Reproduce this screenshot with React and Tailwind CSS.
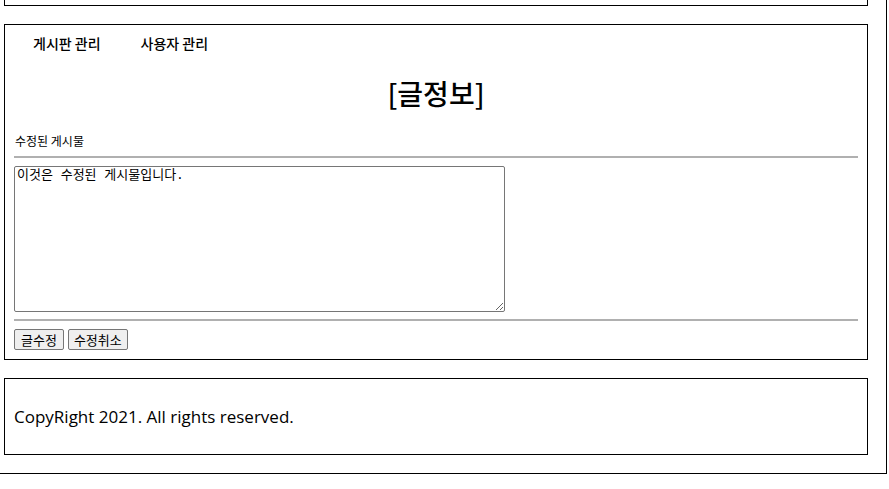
import React from 'react'

const kr = { fontFamily: '"Noto Sans CJK KR", "Noto Sans", sans-serif' };

function Nav() {
  return (
    <div className="flex gap-[40px] pl-[19px] pt-[8px] text-[14px] font-medium text-black leading-[20px]">
      <span>게시판 관리</span>
      <span>사용자 관리</span>
    </div>
  );
}

function Editor() {
  return (
    <div>
      <p className="text-[12px] leading-[16px] pl-[1px]">수정된 게시물</p>
      <hr className="mt-[7px] border-t-2 border-[#b0b0b0] border-b-0" />
      <textarea
        defaultValue="이것은 수정된 게시물입니다."
        className="mt-[8px] block w-[491px] h-[146px] border border-[#767676] rounded-[2px] px-[2px] py-[1px] text-[13px] leading-[16px] resize-y outline-none"
        style={{ fontFamily: '"Liberation Mono", "Noto Sans CJK KR", monospace' }}
      />
      <hr className="mt-[7px] border-t-2 border-[#b0b0b0] border-b-0" />
      <div className="flex gap-[4px] mt-[8px]">
        <button className="h-[21px] px-[6px] bg-[#efefef] border border-[#767676] rounded-[2px] text-[13px] leading-[17px]">글수정</button>
        <button className="h-[21px] px-[5px] bg-[#efefef] border border-[#767676] rounded-[2px] text-[13px] leading-[17px]">수정취소</button>
      </div>
    </div>
  );
}

export default function App() {
  return (
    <div className="w-[887px] h-[474px] border-r border-b border-black bg-white overflow-hidden" style={kr}>
      <div className="ml-[4px] w-[864px] h-[46px] mt-[-40px] border border-black" />
      <div className="ml-[4px] w-[864px] mt-[18px] h-[336px] border border-black px-[9px]">
        <Nav />
        <h1 className="text-center text-[28px] font-medium leading-[36px] mt-[22px]">[글정보]</h1>
        <div className="mt-[22px]">
          <Editor />
        </div>
      </div>
      <div className="ml-[4px] w-[864px] mt-[18px] h-[77px] border border-black px-[9px] flex items-center">
        <p className="text-[17px] text-black" style={{ fontFamily: '"Open Sans", "Noto Sans", sans-serif' }}>CopyRight 2021. All rights reserved.</p>
      </div>
    </div>
  );
}
